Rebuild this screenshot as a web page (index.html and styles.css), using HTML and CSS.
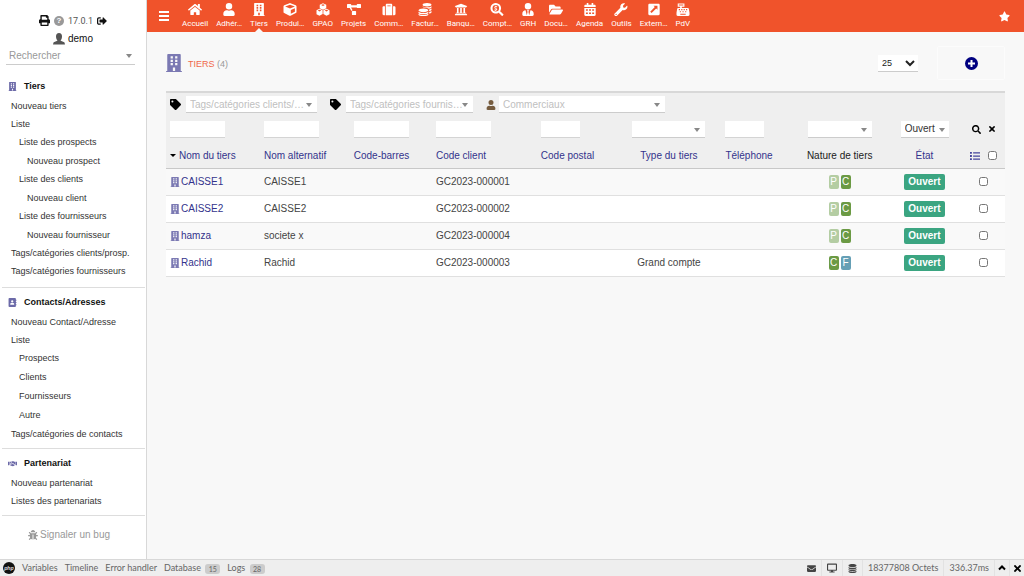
FILE: index.html
```html
<!DOCTYPE html>
<html lang="fr">
<head>
<meta charset="utf-8">
<meta name="viewport" content="width=device-width, initial-scale=1">
<title>Tiers</title>
<link rel="stylesheet" href="styles.css">
</head>
<body>
<svg class="sprite" aria-hidden="true">
  <symbol id="building" viewBox="0 0 448 512"><path fill-rule="evenodd" d="M436 480h-20V24c0-13-11-24-24-24H56C43 0 32 11 32 24v456H12c-7 0-12 5-12 12v20h448v-20c0-7-5-12-12-12zM128 64h64v64h-64zM256 64h64v64h-64zM128 160h64v64h-64zM256 160h64v64h-64zM128 256h64v64h-64zM256 256h64v64h-64zM192 384h64v96h-64z"/></symbol>
  <symbol id="user" viewBox="0 0 448 512"><path d="M224 256a128 128 0 1 0 0-256 128 128 0 0 0 0 256zm90 32h-17a174 174 0 0 1-146 0h-17C60 288 0 348 0 422v42c0 27 21 48 48 48h352c27 0 48-21 48-48v-42c0-74-60-134-134-134z"/></symbol>
  <symbol id="tag" viewBox="0 0 512 512"><path fill-rule="evenodd" d="M0 252V48C0 21 21 0 48 0h204c13 0 25 5 34 14l212 212c19 19 19 49 0 68L294 498c-19 19-49 19-68 0L14 286c-9-9-14-21-14-34zM112 64a48 48 0 1 0 0 96 48 48 0 0 0 0-96z"/></symbol>
  <symbol id="home" viewBox="0 0 576 512"><path d="M280 148 96 300v164c0 9 7 16 16 16h112c9 0 16-7 16-16v-96h96v96c0 9 7 16 16 16h112c9 0 16-7 16-16V300L296 148c-5-4-11-4-16 0zm292 103-84-69V44c0-7-5-12-12-12h-56c-7 0-12 5-12 12v73l-90-74c-17-14-43-14-60 0L4 251c-5 4-6 12-2 17l26 31c4 5 12 6 17 2L280 107c5-4 11-4 16 0l235 194c5 4 13 3 17-2l26-31c4-5 3-13-2-17z"/></symbol>
  <symbol id="cube" viewBox="0 0 512 512"><path fill-rule="evenodd" d="M239 6 31 84C12 91 0 109 0 129v225c0 18 10 35 27 43l208 104c13 7 29 7 42 0l208-104c17-8 27-25 27-43V129c0-20-12-38-31-45L273 6c-11-4-23-4-34 0zm17 62 192 72v1l-192 78-192-78v-1zm32 357V275l160-65v135z"/></symbol>
  <symbol id="cubes" viewBox="0 0 512 512"><path fill-rule="evenodd" d="M256 10 384 65v145L256 270 128 210V65zM256 50l-75 32 75 32 75-32zM118 230l124 55v150L118 502 0 440V285zM118 268l-70 30 70 32 70-32zM394 230l118 55v155l-118 62-124-67V285zM394 268l-70 30 70 32 70-32z"/></symbol>
  <symbol id="project" viewBox="0 0 640 512"><path d="M384 320H256c-18 0-32 14-32 32v128c0 18 14 32 32 32h128c18 0 32-14 32-32V352c0-18-14-32-32-32zM192 32c0-18-14-32-32-32H32C14 0 0 14 0 32v128c0 18 14 32 32 32h95l73 128c11-19 32-31 56-32l-64-112v-16h256V64H192zM608 0H480c-18 0-32 14-32 32v128c0 18 14 32 32 32h128c18 0 32-14 32-32V32c0-18-14-32-32-32z"/></symbol>
  <symbol id="suitcase" viewBox="0 0 512 512"><path fill-rule="evenodd" d="M128 480h256V80c0-27-21-48-48-48H176c-27 0-48 21-48 48zm64-384h128v32H192zM96 480H48c-27 0-48-21-48-48V176c0-27 21-48 48-48h48zM512 176v256c0 27-21 48-48 48h-48V128h48c27 0 48 21 48 48z"/></symbol>
  <symbol id="coins" viewBox="0 0 512 512"><path d="M160 70c0-38 76-70 176-70s176 32 176 70-76 68-176 68-176-30-176-68zM160 125c35 35 110 45 176 45s141-12 176-45v40c0 28-42 50-104 58-28-20-90-37-160-40-52-6-88-28-88-58zM420 255c45-8 76-22 92-35v45c0 24-36 46-92 54zM420 350c45-8 76-22 92-35v45c0 24-36 46-92 54zM0 290c0-42 84-76 194-76s194 34 194 76-84 72-194 72S0 332 0 290zM0 345c42 34 118 50 194 50s152-16 194-50v35c0 36-84 62-194 62S0 416 0 380zM0 425c42 34 118 48 194 48s152-14 194-48v25c0 36-84 62-194 62S0 486 0 450z"/></symbol>
  <symbol id="bank" viewBox="0 0 512 512"><path d="M496 128v16a8 8 0 0 1-8 8h-24v12c0 7-5 12-12 12H60c-7 0-12-5-12-12v-12H24a8 8 0 0 1-8-8v-16a8 8 0 0 1 5-7L253 25h6l232 96a8 8 0 0 1 5 7zM472 432H40c-13 0-24 11-24 24v16c0 4 4 8 8 8h464c4 0 8-4 8-8v-16c0-13-11-24-24-24zM96 192v192H60c-7 0-12 5-12 12v20h416v-20c0-7-5-12-12-12h-36V192h-64v192h-64V192h-64v192h-64V192z"/></symbol>
  <symbol id="searchmoney" viewBox="0 0 512 512"><path fill-rule="evenodd" d="M505 443 405 343c-4-4-11-7-17-7h-16a208 208 0 1 0-36 36v16c0 6 3 13 7 17l100 100c9 9 24 9 34 0l28-28c9-9 9-24 0-34zM208 336a128 128 0 1 1 0-256 128 128 0 0 1 0 256z"/><path d="M190 110h36v20h35v34h-62c-22 0-20 24 0 28 35 8 68 20 66 58-2 28-20 38-39 42v20h-36v-20h-40v-34h66c22 0 22-22 0-28-35-8-66-20-64-56 2-26 20-40 38-44z"/></symbol>
  <symbol id="search" viewBox="0 0 512 512"><path fill-rule="evenodd" d="M505 443 405 343c-4-4-11-7-17-7h-16a208 208 0 1 0-36 36v16c0 6 3 13 7 17l100 100c9 9 24 9 34 0l28-28c9-9 9-24 0-34zM208 336a128 128 0 1 1 0-256 128 128 0 0 1 0 256z"/></symbol>
  <symbol id="usertie" viewBox="0 0 448 512"><path fill-rule="evenodd" d="M224 256a128 128 0 1 0 0-256 128 128 0 0 0 0 256zm96 33-48 191-32-136 32-56h-96l32 56-32 136-48-191C57 292 0 350 0 422v42c0 27 21 48 48 48h352c27 0 48-21 48-48v-42c0-72-57-130-128-133z"/></symbol>
  <symbol id="folder" viewBox="0 0 576 512"><path d="m573 293-73 124c-14 25-47 47-76 47H45c-19 0-30-20-21-36l73-124c14-25 47-48 76-48h379c19 0 30 21 21 37zM152 224h328v-48c0-27-21-48-48-48H272l-64-64H48c-27 0-48 21-48 48v278l69-118c17-29 49-48 83-48z"/></symbol>
  <symbol id="calendar" viewBox="0 0 448 512"><path fill-rule="evenodd" d="M0 464c0 27 21 48 48 48h352c27 0 48-21 48-48V192H0zM64 250h75v60H64zM187 250h75v60h-75zM310 250h75v60h-75zM64 370h75v60H64zM187 370h75v60h-75zM310 370h75v60h-75zM400 64h-48V0h-64v64H160V0H96v64H48c-27 0-48 21-48 48v48h448v-48c0-27-21-48-48-48z"/></symbol>
  <symbol id="wrench" viewBox="0 0 512 512"><path fill-rule="evenodd" d="M507 115c-2-9-13-12-20-5l-74 74-68-11-11-68 74-74c7-7 4-18-5-20A144 144 0 0 0 232 190L19 403a64 64 0 1 0 90 90l213-213A144 144 0 0 0 507 115zM64 472a24 24 0 1 1 0-48 24 24 0 0 1 0 48z"/></symbol>
  <symbol id="external" viewBox="0 0 448 512"><path fill-rule="evenodd" d="M448 80v352c0 27-21 48-48 48H48c-27 0-48-21-48-48V80c0-27 21-48 48-48h352c27 0 48 21 48 48zM205 110l50 50L75 340l55 55 180-180 50 50V110z"/></symbol>
  <symbol id="register" viewBox="0 0 512 512"><path fill-rule="evenodd" d="M511 379 485 230c-3-22-23-38-47-38H208v-48h104V16H48v128h96v48H74c-24 0-44 16-47 38L1 379l-1 21v64c0 27 21 48 48 48h416c27 0 48-21 48-48v-64zM90 60h180v40H90zM90 240h48v45H90zM185 240h48v45h-48zM280 240h48v45h-48zM375 240h48v45h-48zM130 320h45v40h-45zM235 320h45v40h-45zM340 320h45v40h-45zM150 420h212v40H150z"/></symbol>
  <symbol id="star" viewBox="0 0 576 512"><path d="m259 18-65 132-146 21c-26 4-37 36-18 55l106 103-25 145c-5 26 23 46 46 34l131-69 131 69c23 12 51-8 46-34l-25-145 106-103c19-19 8-51-18-55l-146-21-65-132c-12-24-46-24-58 0z"/></symbol>
  <symbol id="print" viewBox="0 0 512 512"><path fill-rule="evenodd" d="M448 192V77c0-8-3-16-9-22L393 9c-6-6-14-9-22-9H96C78 0 64 14 64 32v160c-35 0-64 29-64 64v112c0 9 7 16 16 16h48v96c0 18 14 32 32 32h320c18 0 32-14 32-32v-96h48c9 0 16-7 16-16V256c0-35-29-64-64-64zm-64 256H128v-96h256zm0-224H128V64h192v48c0 9 7 16 16 16h48z"/></symbol>
  <symbol id="logout" viewBox="0 0 512 512"><path d="M497 273 329 441c-15 15-41 5-41-17v-96H152c-13 0-24-11-24-24v-96c0-13 11-24 24-24h136V88c0-21 26-32 41-17l168 168c9 9 9 25 0 34zM192 436v-40c0-7-5-12-12-12H96c-18 0-32-14-32-32V160c0-18 14-32 32-32h84c7 0 12-5 12-12V76c0-7-5-12-12-12H96c-53 0-96 43-96 96v192c0 53 43 96 96 96h84c7 0 12-5 12-12z"/></symbol>
  <symbol id="contact" viewBox="0 0 448 512"><path fill-rule="evenodd" d="M436 160c7 0 12-5 12-12v-40c0-7-5-12-12-12h-20V48c0-27-21-48-48-48H48C21 0 0 21 0 48v416c0 27 21 48 48 48h320c27 0 48-21 48-48v-48h20c7 0 12-5 12-12v-40c0-7-5-12-12-12h-20v-64h20c7 0 12-5 12-12v-40c0-7-5-12-12-12h-20v-64zM208 128a64 64 0 1 1 0 128 64 64 0 0 1 0-128zm112 237c0 11-10 19-22 19H118c-12 0-22-8-22-19v-19c0-32 30-58 67-58h90c37 0 67 26 67 58z"/></symbol>
  <symbol id="handshake" viewBox="0 0 640 512"><path d="M0 128h90v256H0zM550 128h90v256h-90zM115 128h120l60-30h90l60 30h80v225h-30L400 260l-60-40-60 45c-40 20-70-15-55-45l50-75h-50L130 350h-15zM140 375l80-90c20 45 70 40 95 15l30-25 120 100c15 35-15 50-35 40-10 30-40 30-55 15-20 25-50 20-65 5-40 10-90-40-170-60z"/></symbol>
  <symbol id="bug" viewBox="0 0 512 512"><path d="M512 288c0 18-14 32-32 32h-64v16c0 22-5 42-13 60l60 60c24 31-14 69-46 46l-54-55a143 143 0 0 1-83 33V236h-48v244c-32-3-60-14-83-33l-54 55c-31 24-69-14-46-46l60-60c-8-18-13-38-13-60v-16H32c-42-2-42-62 0-64h64v-58l-47-47c-24-31 14-69 46-46l55 55h212l55-55c31-24 69 14 46 46l-47 47v58h64c18 0 32 14 32 32zM257 0c-62 0-112 50-112 112h224C369 50 319 0 257 0z"/></symbol>
  <symbol id="list" viewBox="0 0 512 512"><path d="M0 48h96v96H0zM0 208h96v96H0zM0 368h96v96H0zM160 64h352v64H160zM160 224h352v64H160zM160 384h352v64H160z"/></symbol>
  <symbol id="times" viewBox="0 0 352 352"><path d="m243 176 100-100c12-12 12-32 0-45L321 9c-12-12-32-12-45 0L176 109 76 9C64-3 44-3 31 9L9 31c-12 12-12 32 0 45l100 100L9 276c-12 12-12 32 0 45l22 22c12 12 32 12 45 0l100-100 100 100c12 12 32 12 45 0l22-22c12-12 12-32 0-45z"/></symbol>
  <symbol id="envelope" viewBox="0 0 512 512"><path d="M0 112c0-27 21-48 48-48h416c27 0 48 21 48 48v30L290 300c-22 14-46 14-68 0L0 142zM0 190l200 140c35 24 77 24 112 0l200-140v210c0 27-21 48-48 48H48c-27 0-48-21-48-48z"/></symbol>
  <symbol id="desktop" viewBox="0 0 576 512"><path fill-rule="evenodd" d="M528 0H48C21 0 0 21 0 48v320c0 27 21 48 48 48h192l-16 48h-72c-32 2-32 46 0 48h272c32-2 32-46 0-48h-72l-16-48h192c27 0 48-21 48-48V48c0-27-21-48-48-48zm-16 352H64V64h448z"/></symbol>
  <symbol id="database" viewBox="0 0 448 512"><path d="M448 73v30c0 40-100 73-224 73S0 143 0 103V73C0 33 100 0 224 0s224 33 224 73zM0 165c48 33 136 48 224 48s176-15 224-48v58c0 40-100 73-224 73S0 263 0 223zM0 285c48 33 136 48 224 48s176-15 224-48v44c0 40-100 73-224 73S0 369 0 329zM0 391c48 33 136 48 224 48s176-15 224-48v48c0 40-100 73-224 73S0 479 0 439z"/></symbol>
</svg>

<div class="app">
  <aside class="sidebar">
    <div class="account">
      <div class="account-row">
        <svg class="icon icon-11"><use href="#print"/></svg>
        <span class="help">?</span>
        <span class="version">17.0.1</span>
        <svg class="icon icon-10"><use href="#logout"/></svg>
      </div>
      <a class="account-row account-user" href="#">
        <svg class="icon icon-12 avatar" viewBox="0 0 24 24"><path d="M12 0C8 0 6 3 6 7c0 3 1 6 3 8-1 2-7 2-8 4l-1 4h24l-1-4c-1-2-7-2-8-4 2-2 3-5 3-8 0-4-2-7-6-7z"/></svg>
        demo
      </a>
    </div>
    <div class="select search-select">
      <select aria-label="Rechercher"><option>Rechercher</option></select>
    </div>
    <nav class="menu">
      <section class="menu-block">
        <h2 class="menu-title"><svg class="icon icon-9"><use href="#building"/></svg>Tiers</h2>
        <a class="menu-item" href="#">Nouveau tiers</a>
        <a class="menu-item" href="#">Liste</a>
        <a class="menu-item level-1" href="#">Liste des prospects</a>
        <a class="menu-item level-2" href="#">Nouveau prospect</a>
        <a class="menu-item level-1" href="#">Liste des clients</a>
        <a class="menu-item level-2" href="#">Nouveau client</a>
        <a class="menu-item level-1" href="#">Liste des fournisseurs</a>
        <a class="menu-item level-2" href="#">Nouveau fournisseur</a>
        <a class="menu-item" href="#">Tags/catégories clients/prosp.</a>
        <a class="menu-item" href="#">Tags/catégories fournisseurs</a>
      </section>
      <section class="menu-block">
        <h2 class="menu-title"><svg class="icon icon-9"><use href="#contact"/></svg>Contacts/Adresses</h2>
        <a class="menu-item" href="#">Nouveau Contact/Adresse</a>
        <a class="menu-item" href="#">Liste</a>
        <a class="menu-item level-1" href="#">Prospects</a>
        <a class="menu-item level-1" href="#">Clients</a>
        <a class="menu-item level-1" href="#">Fournisseurs</a>
        <a class="menu-item level-1" href="#">Autre</a>
        <a class="menu-item" href="#">Tags/catégories de contacts</a>
      </section>
      <section class="menu-block">
        <h2 class="menu-title"><svg class="icon icon-9"><use href="#handshake"/></svg>Partenariat</h2>
        <a class="menu-item" href="#">Nouveau partenariat</a>
        <a class="menu-item" href="#">Listes des partenariats</a>
      </section>
    </nav>
    <a class="bug-link" href="#"><svg class="icon icon-10"><use href="#bug"/></svg>Signaler un bug</a>
  </aside>

  <div class="content">
    <header class="topbar">
      <button class="burger" aria-label="Menu"><span></span><span></span><span></span></button>
      <nav class="tabs">
        <a class="tab" href="#"><svg class="icon tab-icon"><use href="#home"/></svg>Accueil</a>
        <a class="tab" href="#"><svg class="icon tab-icon"><use href="#user"/></svg>Adhér…</a>
        <a class="tab active" href="#"><svg class="icon tab-icon"><use href="#building"/></svg>Tiers</a>
        <a class="tab" href="#"><svg class="icon tab-icon"><use href="#cube"/></svg>Produi…</a>
        <a class="tab" href="#"><svg class="icon tab-icon"><use href="#cubes"/></svg>GPAO</a>
        <a class="tab" href="#"><svg class="icon tab-icon"><use href="#project"/></svg>Projets</a>
        <a class="tab" href="#"><svg class="icon tab-icon"><use href="#suitcase"/></svg>Comm…</a>
        <a class="tab" href="#"><svg class="icon tab-icon"><use href="#coins"/></svg>Factur…</a>
        <a class="tab" href="#"><svg class="icon tab-icon"><use href="#bank"/></svg>Banqu…</a>
        <a class="tab" href="#"><svg class="icon tab-icon"><use href="#searchmoney"/></svg>Compt…</a>
        <a class="tab" href="#"><svg class="icon tab-icon"><use href="#usertie"/></svg>GRH</a>
        <a class="tab" href="#"><svg class="icon tab-icon"><use href="#folder"/></svg>Docu…</a>
        <a class="tab" href="#"><svg class="icon tab-icon"><use href="#calendar"/></svg>Agenda</a>
        <a class="tab" href="#"><svg class="icon tab-icon"><use href="#wrench"/></svg>Outils</a>
        <a class="tab" href="#"><svg class="icon tab-icon"><use href="#external"/></svg>Extern…</a>
        <a class="tab" href="#"><svg class="icon tab-icon"><use href="#register"/></svg>PdV</a>
      </nav>
      <button class="favorite" aria-label="Favoris"><svg class="icon icon-11"><use href="#star"/></svg></button>
    </header>

    <main class="page">
      <div class="page-head">
        <svg class="icon title-icon"><use href="#building"/></svg>
        <h1 class="title">TIERS <span class="count">(4)</span></h1>
        <select class="page-size" aria-label="Lignes par page"><option>25</option></select>
        <button class="add" aria-label="Nouveau tiers">
          <svg class="icon add-icon" viewBox="0 0 26 26"><circle cx="13" cy="13" r="13"/><path class="add-cross" d="M13 6v14M6 13h14"/></svg>
        </button>
      </div>

      <div class="list">
        <div class="filters">
          <svg class="icon icon-11"><use href="#tag"/></svg>
          <div class="select boxed filter-client"><select aria-label="Catégories clients"><option>Tags/catégories clients/…</option></select></div>
          <svg class="icon icon-11"><use href="#tag"/></svg>
          <div class="select boxed filter-supplier"><select aria-label="Catégories fournisseurs"><option>Tags/catégories fournis…</option></select></div>
          <svg class="icon icon-10 brown"><use href="#user"/></svg>
          <div class="select boxed filter-sales"><select aria-label="Commerciaux"><option>Commerciaux</option></select></div>
        </div>
        <table class="grid">
          <colgroup>
            <col class="c-name"><col class="c-alt"><col class="c-bar"><col class="c-code"><col class="c-zip"><col class="c-type"><col class="c-tel"><col class="c-nature"><col class="c-state"><col class="c-action">
          </colgroup>
          <thead>
            <tr class="search-row">
              <td><input class="field" type="text" aria-label="Nom du tiers"></td>
              <td><input class="field" type="text" aria-label="Nom alternatif"></td>
              <td><input class="field" type="text" aria-label="Code-barres"></td>
              <td><input class="field" type="text" aria-label="Code client"></td>
              <td><input class="field short" type="text" aria-label="Code postal"></td>
              <td class="center"><div class="select boxed pick-type"><select aria-label="Type du tiers"><option></option></select></div></td>
              <td><input class="field short" type="text" aria-label="Téléphone"></td>
              <td class="center"><div class="select boxed pick-nature"><select aria-label="Nature de tiers"><option></option></select></div></td>
              <td class="center"><div class="select boxed pick-state"><select aria-label="État"><option>Ouvert</option></select></div></td>
              <td class="action"><div class="actions">
                <button aria-label="Rechercher"><svg class="icon icon-9"><use href="#search"/></svg></button>
                <button aria-label="Effacer"><svg class="icon icon-6"><use href="#times"/></svg></button>
              </div></td>
            </tr>
            <tr class="head-row">
              <th><a class="sorted" href="#">Nom du tiers</a></th>
              <th><a href="#">Nom alternatif</a></th>
              <th><a href="#">Code-barres</a></th>
              <th><a href="#">Code client</a></th>
              <th><a href="#">Code postal</a></th>
              <th class="center"><a href="#">Type du tiers</a></th>
              <th><a href="#">Téléphone</a></th>
              <th class="center">Nature de tiers</th>
              <th class="center"><a href="#">État</a></th>
              <th class="action"><div class="actions"><svg class="icon icon-10 violet"><use href="#list"/></svg><input class="check" type="checkbox" aria-label="Tout sélectionner"></div></th>
            </tr>
          </thead>
          <tbody>
            <tr><td><a href="#"><svg class="icon icon-10"><use href="#building"/></svg>CAISSE1</a></td><td>CAISSE1</td><td></td><td>GC2023-000001</td><td></td><td></td><td></td><td class="center"><span class="kind prospect">P</span><span class="kind client">C</span></td><td class="center"><span class="status">Ouvert</span></td><td class="center action"><input class="check" type="checkbox" aria-label="CAISSE1"></td></tr>
            <tr><td><a href="#"><svg class="icon icon-10"><use href="#building"/></svg>CAISSE2</a></td><td>CAISSE2</td><td></td><td>GC2023-000002</td><td></td><td></td><td></td><td class="center"><span class="kind prospect">P</span><span class="kind client">C</span></td><td class="center"><span class="status">Ouvert</span></td><td class="center action"><input class="check" type="checkbox" aria-label="CAISSE2"></td></tr>
            <tr><td><a href="#"><svg class="icon icon-10"><use href="#building"/></svg>hamza</a></td><td>societe x</td><td></td><td>GC2023-000004</td><td></td><td></td><td></td><td class="center"><span class="kind prospect">P</span><span class="kind client">C</span></td><td class="center"><span class="status">Ouvert</span></td><td class="center action"><input class="check" type="checkbox" aria-label="hamza"></td></tr>
            <tr><td><a href="#"><svg class="icon icon-10"><use href="#building"/></svg>Rachid</a></td><td>Rachid</td><td></td><td>GC2023-000003</td><td></td><td class="center">Grand compte</td><td></td><td class="center"><span class="kind client">C</span><span class="kind supplier">F</span></td><td class="center"><span class="status">Ouvert</span></td><td class="center action"><input class="check" type="checkbox" aria-label="Rachid"></td></tr>
          </tbody>
        </table>
      </div>
    </main>
  </div>
</div>

<footer class="debugbar">
  <span class="php">php</span>
  <a href="#">Variables</a>
  <a href="#">Timeline</a>
  <a href="#">Error handler</a>
  <a href="#">Database <span class="pill">15</span></a>
  <a href="#">Logs <span class="pill">28</span></a>
  <div class="debug-right">
    <span class="cell"><svg class="icon icon-9"><use href="#envelope"/></svg></span>
    <span class="cell"><svg class="icon icon-10"><use href="#desktop"/></svg></span>
    <span class="cell"><svg class="icon icon-9"><use href="#database"/></svg></span>
    <span class="cell">18377808 Octets</span>
    <span class="cell">336.37ms</span>
    <button class="cell slim" aria-label="Réduire"><svg class="icon icon-8" viewBox="0 0 16 16"><path class="chevron" d="M2 11l6-6 6 6"/></svg></button>
    <button class="close" aria-label="Fermer"><svg class="icon icon-7"><use href="#times"/></svg></button>
  </div>
</footer>
</body>
</html>
```
FILE: styles.css
```css
* { box-sizing: border-box; }

body {
  margin: 0;
  min-height: 100vh;
  display: flex;
  flex-direction: column;
  background: #f8f8f8;
  color: #444;
  font-family: "Liberation Sans", Arial, sans-serif;
  font-size: 10px;
  line-height: 12px;
}

a { color: inherit; text-decoration: none; }
button { border: 0; padding: 0; background: none; color: inherit; display: flex; align-items: center; justify-content: center; }
input, select { font: inherit; color: inherit; }

.sprite { display: none; }
.icon { display: block; flex: none; fill: currentColor; }
.icon-6 { width: 6px; height: 6px; }
.icon-7 { width: 7px; height: 7px; }
.icon-8 { width: 8px; height: 8px; }
.icon-9 { width: 9px; height: 9px; }
.icon-10 { width: 10px; height: 10px; }
.icon-11 { width: 11px; height: 11px; }
.icon-12 { width: 12px; height: 12px; }
.brown { color: #765c3f; }
.violet { color: #44449c; }

.app { flex: 1; display: flex; }

/* Sidebar */
.sidebar { flex: none; width: 147px; background: #fff; border-right: 1px solid #d8d8d8; font-size: 9px; }
.account { display: flex; flex-direction: column; align-items: center; gap: 5px; padding: 14px 0 1px; color: #111; }
.account-row { display: flex; align-items: center; gap: 4px; height: 13px; }
.account-user { font-size: 10px; gap: 3px; }
.avatar { color: #555; }
.help { width: 10px; height: 10px; border-radius: 5px; background: #999; color: #fff; font-size: 8px; line-height: 10px; font-weight: bold; text-align: center; }
.version { color: #555; font-family: Roboto, sans-serif; font-size: 9px; }

.select { position: relative; }
.select::after { content: ""; position: absolute; right: 5px; top: 7px; border: 3px solid transparent; border-top: 4px solid #888; border-bottom: 0; pointer-events: none; }
.select select { display: block; width: 100%; height: 17px; padding: 1px 4px 0; border: 0; border-bottom: 1px solid #ccc; border-radius: 0; background: transparent; color: #c0c0c0; appearance: none; }
.boxed select { background: #fff; }
.search-select { margin: 1px 11px 0 6px; font-size: 10px; }
.search-select::after { right: 3px; }
.search-select select { color: #999; height: 18px; padding: 0 3px; }

.menu { margin-top: 7px; }
.menu-block { padding: 4px 0 5px; margin: 0 1px 0 2px; border-bottom: 1px solid #ddd; }
.menu-block:first-child { padding-bottom: 7px; }
.menu-title { display: flex; align-items: center; gap: 7px; margin: 0 0 1px; padding-left: 6px; height: 20px; font-size: 9px; color: #111; }
.menu-title .icon { color: #6c6aa8; }
.menu-item { display: block; padding-left: 9px; line-height: 18px; color: #333; white-space: nowrap; }
.level-1 { padding-left: 17px; line-height: 19px; }
.level-2 { padding-left: 25px; }
.bug-link { display: flex; align-items: center; justify-content: center; gap: 2px; padding-right: 8px; margin-top: 13px; font-size: 10px; color: #999; }

/* Top bar */
.content { flex: 1; min-width: 0; }
.topbar { display: flex; align-items: stretch; height: 32px; padding: 0 14px 0 12px; background: #f0532b; color: #fff; }
.burger { flex-direction: column; gap: 2px; width: 10px; }
.burger span { width: 10px; height: 2px; background: #fff; }
.tabs { flex: 1; display: flex; gap: 8px; margin-left: 13px; }
.tab { position: relative; display: flex; flex-direction: column; align-items: center; gap: 2px; padding-top: 3px; font-family: Roboto, sans-serif; font-size: 8px; }
.tab-icon { width: 14px; height: 13px; }
.active::after { content: ""; position: absolute; bottom: 0; border: 4px solid transparent; border-top: 0; border-bottom-color: #f8f8f8; }

/* Page header */
.page { padding: 14px 19px 20px; }
.page-head { display: flex; align-items: center; height: 34px; }
.title-icon { width: 16px; height: 18px; color: #7b79b3; }
.title { flex: 1; margin: 0 0 0 6px; padding-top: 2px; font-size: 9px; font-weight: normal; color: #f0694a; }
.count { color: #999; }
.page-size { width: 40px; height: 17px; margin-right: 19px; padding: 0; border: 0; border-bottom: 1px solid #ccc; border-radius: 0; background: #fff; color: #222; font-size: 9px; }
.add { width: 68px; height: 34px; border: 1px solid #fcfcfc; border-radius: 2px; color: #000080; }
.add-icon { width: 13px; height: 13px; }
.add-cross { stroke: #fff; stroke-width: 4; fill: none; }

/* List */
.list { margin-top: 11px; border-top: 2px solid #d8d8d8; background: #efefef; }
.filters { display: flex; align-items: center; padding: 2px 4px 0; height: 21px; color: #000; }
.filters .select { margin: 0 13px 0 5px; }
.filters .brown + .select { margin-left: 3px; }
.filter-client { width: 131px; }
.filter-supplier { width: 127px; }
.filter-sales { width: 166px; }

.grid { width: 100%; table-layout: fixed; border-collapse: collapse; }
.c-name { width: 11.2%; }
.c-alt { width: 10.7%; }
.c-bar { width: 9.8%; }
.c-code { width: 12.5%; }
.c-zip { width: 9.5%; }
.c-type { width: 12.5%; }
.c-tel { width: 7.3%; }
.c-nature { width: 13.6%; }
.c-state { width: 6.6%; }
.c-action { width: 6.3%; }
.grid td, .grid th { padding: 0 4px; text-align: left; font-weight: normal; white-space: nowrap; vertical-align: middle; }
.grid .center { text-align: center; }
.grid .action { padding: 0 0 0 10px; }
.grid a { color: #33338c; }

.search-row { height: 30px; }
.field { display: block; width: 55px; height: 17px; padding: 0 2px; border: 0; border-bottom: 1px solid #d4d4d4; background: #fff; }
.field.short { width: 39px; }
.search-row .select { margin: 0 auto; }
.search-row .select select { color: #333; }
.pick-type { width: 73px; }
.pick-nature { width: 64px; }
.pick-state { width: 48px; }
.pick-state::after { right: 4px; }
.actions { display: flex; align-items: center; justify-content: center; gap: 8px; color: #000; }

.head-row { height: 24px; border-bottom: 1px solid #c8c8c8; color: #222; }
.sorted { display: flex; align-items: center; gap: 3px; }
.sorted::before { content: ""; border: 3px solid transparent; border-top-color: #000; border-bottom: 0; }

.grid tbody tr { height: 27px; background: #fff; border-bottom: 1px solid #e0e0e0; }
.grid tbody tr:nth-child(odd) { background: #f9f9f9; }
.grid tbody a { display: flex; align-items: center; gap: 1px; }
.grid tbody .icon { color: #7b79b3; }
.check { display: inline-block; width: 9px; height: 9px; margin: 0; vertical-align: middle; }
.kind { display: inline-block; width: 10px; height: 14px; margin: 0 1px; border-radius: 2px; color: #fff; line-height: 14px; text-align: center; }
.prospect { background: #b4cda3; }
.client { background: #6b9a44; }
.supplier { background: #659fb5; }
.status { display: inline-block; padding: 0 4px; border-radius: 2px; background: #3ba581; color: #fff; font-weight: bold; line-height: 16px; }

/* Debug bar */
.debugbar { display: flex; align-items: center; gap: 7px; height: 17px; padding: 0 3px; border-top: 1px solid #d8d8d8; background: #eee; color: #666; font-family: Lato, sans-serif; font-size: 9px; white-space: nowrap; }
.php { width: 12px; height: 12px; border-radius: 6px; background: #111; color: #ddd; font-size: 6px; font-style: italic; font-weight: bold; line-height: 11px; text-align: center; }
.pill { display: inline-block; min-width: 15px; margin-left: 2px; border-radius: 3px; background: #ccc; font-size: 7px; line-height: 10px; text-align: center; vertical-align: middle; }
.debug-right { display: flex; align-self: stretch; margin-left: auto; }
.cell { display: flex; align-items: center; padding: 0 5px; border-right: 1px solid #e2e2e2; }
.slim { padding: 0 3px; }
.debug-right .icon { color: #444; }
.debug-right button .icon { color: #000; }
.chevron { fill: none; stroke: #000; stroke-width: 4; }
.close { padding-left: 4px; }
```
